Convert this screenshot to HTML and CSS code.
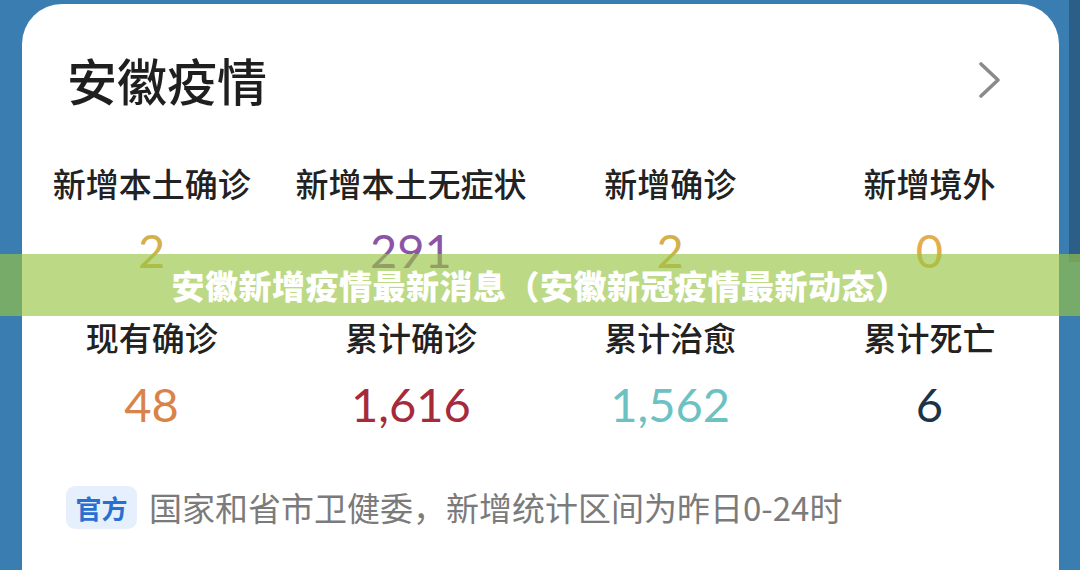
FILE: index.html
```html
<!DOCTYPE html>
<html lang="zh-CN">
<head>
    <meta charset="UTF-8">
    <meta name="viewport" content="width=device-width, initial-scale=1.0">
    <title>安徽疫情</title>
    <link rel="stylesheet" href="styles.css">
</head>
<body>

    <div class="card">
        <div class="card-head">
            <h1 class="title">安徽疫情</h1>
            <svg class="chevron" width="24" height="38" viewBox="0 0 24 38">
                <polyline points="3,3 20,19 3,35" fill="none" stroke="#8a8a8a" stroke-width="3.6" stroke-linecap="round" stroke-linejoin="round"/>
            </svg>
        </div>

        <div class="stats">
            <div class="stat">
                <div class="stat-label">新增本土确诊</div>
                <div class="stat-num gold">2</div>
            </div>
            <div class="stat">
                <div class="stat-label">新增本土无症状</div>
                <div class="stat-num purple">291</div>
            </div>
            <div class="stat">
                <div class="stat-label">新增确诊</div>
                <div class="stat-num gold">2</div>
            </div>
            <div class="stat">
                <div class="stat-label">新增境外</div>
                <div class="stat-num amber">0</div>
            </div>
            <div class="stat">
                <div class="stat-label">现有确诊</div>
                <div class="stat-num orange">48</div>
            </div>
            <div class="stat">
                <div class="stat-label">累计确诊</div>
                <div class="stat-num red">1,616</div>
            </div>
            <div class="stat">
                <div class="stat-label">累计治愈</div>
                <div class="stat-num teal">1,562</div>
            </div>
            <div class="stat">
                <div class="stat-label">累计死亡</div>
                <div class="stat-num navy">6</div>
            </div>
        </div>

        <div class="source">
            <span class="badge">官方</span>
            <span class="source-text">国家和省市卫健委，新增统计区间为昨日0-24时</span>
        </div>
    </div>

    <!-- caption strip laid over the card -->
    <div class="banner">安徽新增疫情最新消息（安徽新冠疫情最新动态）</div>

</body>
</html>
```

FILE: styles.css
```css
html, body {
    height: 100%;
}
body {
    margin: 0;
    overflow: hidden;
    position: relative;
    font-family: "Noto Sans CJK SC", "Noto Sans", sans-serif;
    background: linear-gradient(#2c5f88, #2c5f88) right top / 11px 262px no-repeat, #3a7db0;
}
.card {
    margin: 4px 21px 0 22px;
    padding-bottom: 60px;
    background-color: #fff;
    border-radius: 40px 40px 0 0;
}
.card-head {
    height: 150px;
    display: flex;
    align-items: center;
    justify-content: space-between;
    padding: 0 57px 0 45px;
}
.title {
    margin: 0;
    font-size: 50px;
    font-weight: 500;
    color: #1f1f1f;
    line-height: 1;
}
.chevron {
    display: block;
    margin-top: 2px;
}
.stats {
    display: grid;
    grid-template-columns: repeat(4, 1fr);
    row-gap: 20px;
    text-align: center;
}
.stat-label {
    font-size: 33px;
    font-weight: 500;
    line-height: 58px;
    color: #222;
}
.stat-num {
    font-family: Lato, "Open Sans", sans-serif;
    font-size: 47px;
    line-height: 76px;
}
.gold { color: #d4b04a; }
.purple { color: #8a55a6; }
.amber { color: #e3ad4c; }
.orange { color: #d9834a; }
.red { color: #a52a3c; }
.teal { color: #6cc1c3; }
.navy { color: #1d3446; }
.source {
    display: flex;
    align-items: center;
    padding: 44px 0 0 44px;
}
.badge {
    width: 71px;
    height: 43px;
    display: flex;
    align-items: center;
    justify-content: center;
    border-radius: 9px;
    background-color: #e6f0fc;
    color: #2a6fcf;
    font-size: 26px;
    font-weight: 700;
}
.source-text {
    margin-left: 12px;
    font-size: 33px;
    line-height: 1;
    color: #7b7b7b;
}
.banner {
    position: absolute;
    left: 0;
    right: 0;
    top: 254px;
    height: 62px;
    display: flex;
    align-items: center;
    justify-content: center;
    background-color: rgba(152, 197, 68, 0.65);
    color: #fff;
    font-size: 33px;
    font-weight: 900;
    letter-spacing: 0.5px;
}
```
